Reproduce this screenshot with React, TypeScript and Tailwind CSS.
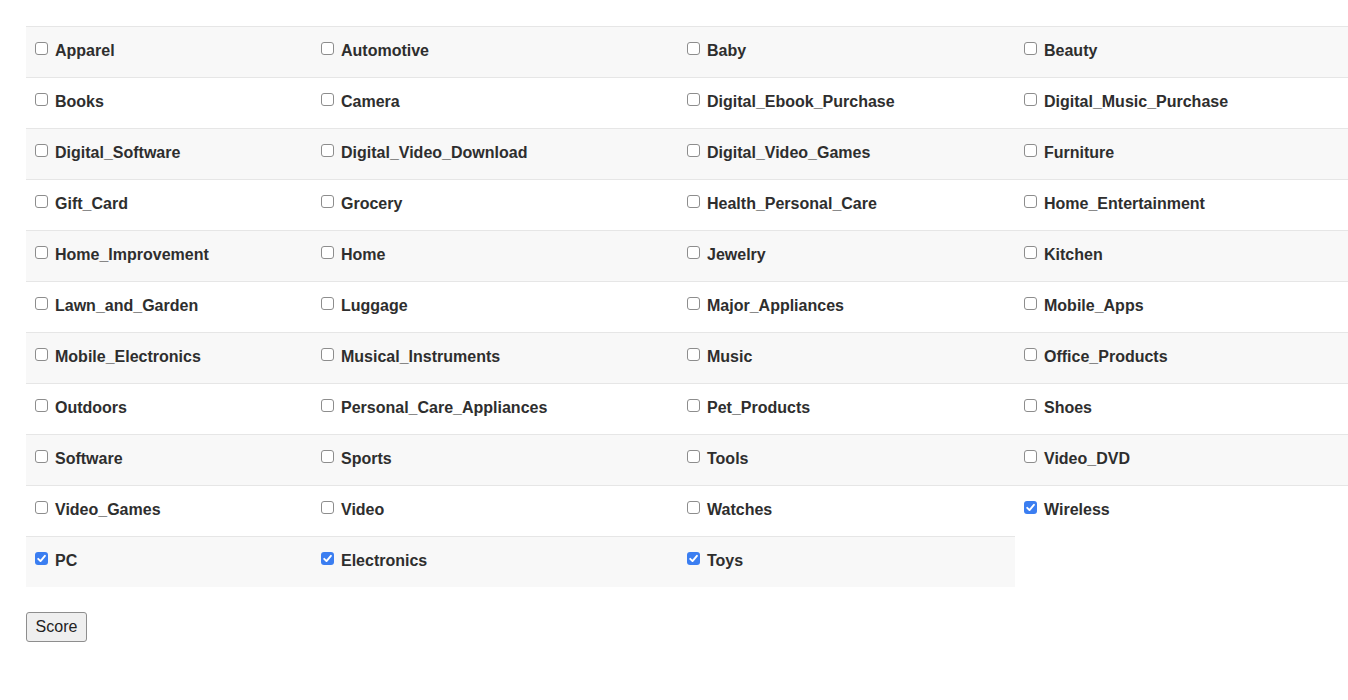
import { useState } from 'react';

const categories = [
  'Apparel', 'Automotive', 'Baby', 'Beauty',
  'Books', 'Camera', 'Digital_Ebook_Purchase', 'Digital_Music_Purchase',
  'Digital_Software', 'Digital_Video_Download', 'Digital_Video_Games', 'Furniture',
  'Gift_Card', 'Grocery', 'Health_Personal_Care', 'Home_Entertainment',
  'Home_Improvement', 'Home', 'Jewelry', 'Kitchen',
  'Lawn_and_Garden', 'Luggage', 'Major_Appliances', 'Mobile_Apps',
  'Mobile_Electronics', 'Musical_Instruments', 'Music', 'Office_Products',
  'Outdoors', 'Personal_Care_Appliances', 'Pet_Products', 'Shoes',
  'Software', 'Sports', 'Tools', 'Video_DVD',
  'Video_Games', 'Video', 'Watches', 'Wireless',
  'PC', 'Electronics', 'Toys',
];

function Box({ checked }: { checked: boolean }) {
  return checked ? (
    <span className="mb-[5px] mr-[7px] flex h-[13px] w-[13px] shrink-0 items-center justify-center rounded-[3px] bg-[#3b7ef1]">
      <svg viewBox="0 0 13 13" className="h-[13px] w-[13px]">
        <path d="M3.2 6.8 L5.5 9.1 L9.9 3.8" fill="none" stroke="white" strokeWidth="1.9" strokeLinecap="round" strokeLinejoin="round" />
      </svg>
    </span>
  ) : (
    <span className="mb-[5px] mr-[7px] block h-[13px] w-[13px] shrink-0 rounded-[3px] border border-[#8d8d8d] bg-white" />
  );
}

export default function App() {
  const [checked, setChecked] = useState<Record<string, boolean>>({
    Wireless: true,
    PC: true,
    Electronics: true,
    Toys: true,
  });

  return (
    <div className="pl-[26px] pt-[26px] font-['Liberation_Sans',Arial,sans-serif] text-[#2e2e2e]">
      <div className="grid grid-cols-[286px_366px_337px_1fr]">
        {categories.map((c, i) => {
          const row = Math.floor(i / 4);
          return (
            <div
              key={c}
              className={`flex h-[51px] items-center border-t border-[#e6e6e6] pb-[2px] pl-[9px] ${row % 2 === 0 ? 'bg-[#f8f8f8]' : 'bg-white'}`}
            >
              <label
                className="flex cursor-pointer items-center text-[16px] font-bold leading-[18px]"
                onClick={() => setChecked((s) => ({ ...s, [c]: !s[c] }))}
              >
                <Box checked={!!checked[c]} />
                {c}
              </label>
            </div>
          );
        })}
      </div>
      <button className="mt-[25px] h-[30px] w-[61px] rounded-[3px] border border-[#8e8e8e] bg-[#efefef] text-[16px] text-[#222]">
        Score
      </button>
    </div>
  );
}
